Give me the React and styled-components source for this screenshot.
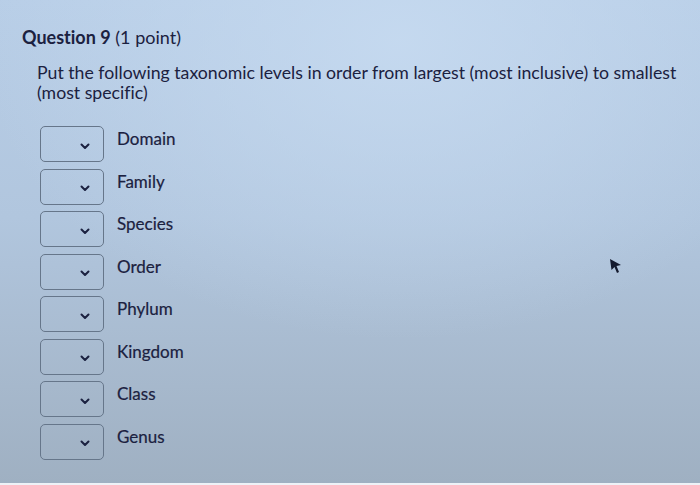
import React from "react";
import styled, { createGlobalStyle } from "styled-components";

const Global = createGlobalStyle`
  html, body { margin: 0; padding: 0; }
  body {
    font-family: Lato, "Open Sans", sans-serif;
    font-variant-ligatures: none;
  }
`;

const Page = styled.div`
  position: relative;
  width: 700px;
  height: 485px;
  box-sizing: border-box;
  overflow: hidden;
  border-bottom: 2px solid #eef2f7;
  background:
    radial-gradient(ellipse 420px 300px at 400px 40px, rgba(198, 218, 240, 0.9), rgba(198, 218, 240, 0) 100%),
    linear-gradient(180deg, #b8cee7 0%, #b1c6de 45%, #a6b8cc 80%, #9fb0c2 100%);
  color: #1b2140;
  padding: 26px 0 0 22px;
`;

const Title = styled.h2`
  margin: 0;
  font-size: 18px;
  line-height: 22px;
  font-weight: 400;
  & b { font-weight: 700; }
`;

const Prompt = styled.p`
  margin: 15px 0 0 15px;
  font-size: 17.7px;
  line-height: 20px;
  width: 655px;
`;

const List = styled.div`
  display: flex;
  flex-direction: column;
  gap: 6.5px;
  margin: 23px 0 0 18px;
`;

const Row = styled.div`
  display: flex;
  align-items: flex-start;
  gap: 13px;
`;

const Select = styled.div`
  width: 64px;
  height: 36px;
  box-sizing: border-box;
  border: 1.6px solid #66768a;
  border-radius: 5px;
  display: flex;
  align-items: center;
  justify-content: flex-end;
  padding: 4px 13px 0 0;
`;

const Label = styled.span`
  font-size: 17px;
  line-height: 20px;
  padding-top: 3px;
  -webkit-text-stroke: 0.2px #1b2140;
`;

const Pointer = styled.svg`
  position: absolute;
  left: 609px;
  top: 258px;
`;

const Chevron = () => (
  <svg width="10" height="7" viewBox="0 0 10 7">
    <path d="M1.5 1.5 L5 5 L8.5 1.5" fill="none" stroke="#1b2140" strokeWidth="2" strokeLinecap="round" strokeLinejoin="round" />
  </svg>
);

const levels = ["Domain", "Family", "Species", "Order", "Phylum", "Kingdom", "Class", "Genus"];

export default function App() {
  return (
    <Page>
      <Global />
      <Title>
        <b>Question 9</b> (1 point)
      </Title>
      <Prompt>
        Put the following taxonomic levels in order from largest (most inclusive) to smallest (most specific)
      </Prompt>
      <List>
        {levels.map((name) => (
          <Row key={name}>
            <Select>
              <Chevron />
            </Select>
            <Label>{name}</Label>
          </Row>
        ))}
      </List>
      <Pointer width="14" height="16" viewBox="0 0 14 16">
        <path d="M1 1 L12 7 L7.5 8 L10 14 L8 15 L5.5 9 L2.5 12 Z" fill="#141a2e" />
      </Pointer>
    </Page>
  );
}
